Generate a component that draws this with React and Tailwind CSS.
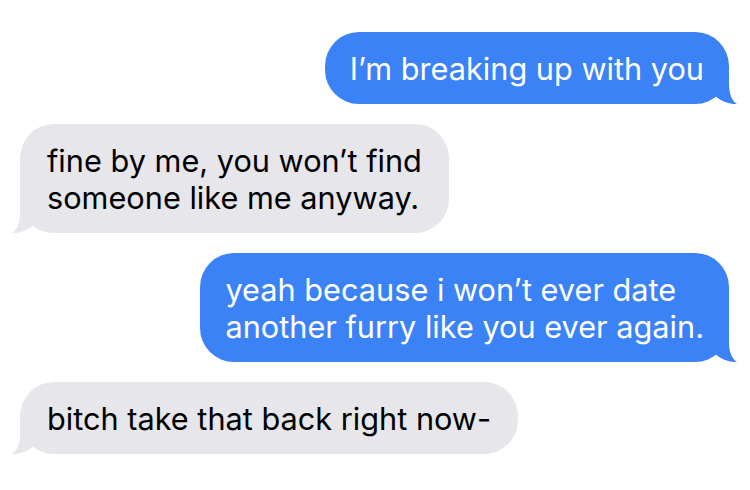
import React from "react";

function Tail({ side, color }) {
  const path =
    "M 32 8 L 32 20 C 32 30 35 37 40 40 C 33 40.5 24 37 19 32.7 L 19 8 Z";
  return (
    <svg
      width="40"
      height="40"
      viewBox="0 0 40 40"
      className={
        side === "right"
          ? "absolute bottom-0 right-[-8px]"
          : "absolute bottom-0 left-[-8px] -scale-x-100"
      }
    >
      <path d={path} fill={color} />
    </svg>
  );
}

function Bubble({ side, children }) {
  const sent = side === "right";
  return (
    <div
      className={
        sent
          ? "relative self-end mr-[21px] rounded-[34px] bg-[#3b82f6] text-white px-[25px] py-[17.5px]"
          : "relative self-start ml-[20px] rounded-[34px] bg-[#e6e6eb] text-black px-[27px] py-[17.5px]"
      }
    >
      <Tail side={side} color={sent ? "#3b82f6" : "#e6e6eb"} />
      <div className="relative whitespace-nowrap text-[30.7px] leading-[37px]">
        {children}
      </div>
    </div>
  );
}

export default function App() {
  return (
    <div
      className="w-[750px] h-[490px] bg-white flex flex-col gap-[20px] pt-[32px] overflow-hidden"
      style={{ fontFamily: "Inter, 'Noto Sans', sans-serif" }}
    >
      <Bubble side="right">I’m breaking up with you</Bubble>
      <Bubble side="left">
        fine by me, you won’t find
        <br />
        someone like me anyway.
      </Bubble>
      <Bubble side="right">
        yeah because i won’t ever date
        <br />
        another furry like you ever again.
      </Bubble>
      <Bubble side="left">bitch take that back right now-</Bubble>
    </div>
  );
}
